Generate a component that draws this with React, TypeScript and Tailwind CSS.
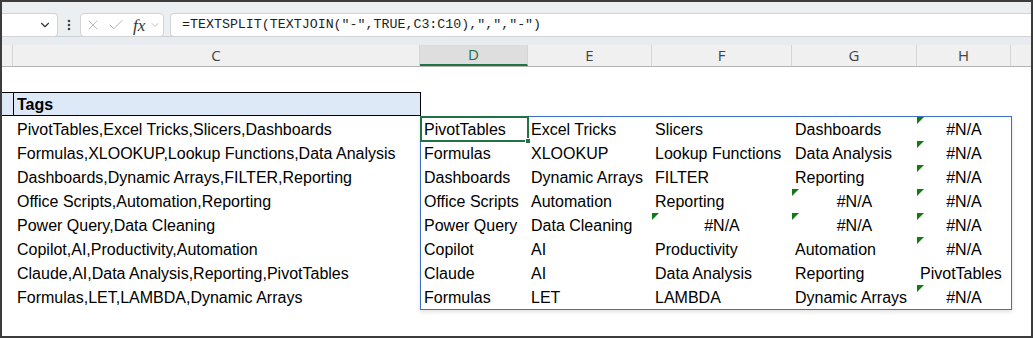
import { ChevronDown, X, Check } from "lucide-react";

const NA = null;

const data: { tags: string; split: (string | null)[] }[] = [
  { tags: "PivotTables,Excel Tricks,Slicers,Dashboards", split: ["PivotTables", "Excel Tricks", "Slicers", "Dashboards", NA] },
  { tags: "Formulas,XLOOKUP,Lookup Functions,Data Analysis", split: ["Formulas", "XLOOKUP", "Lookup Functions", "Data Analysis", NA] },
  { tags: "Dashboards,Dynamic Arrays,FILTER,Reporting", split: ["Dashboards", "Dynamic Arrays", "FILTER", "Reporting", NA] },
  { tags: "Office Scripts,Automation,Reporting", split: ["Office Scripts", "Automation", "Reporting", NA, NA] },
  { tags: "Power Query,Data Cleaning", split: ["Power Query", "Data Cleaning", NA, NA, NA] },
  { tags: "Copilot,AI,Productivity,Automation", split: ["Copilot", "AI", "Productivity", "Automation", NA] },
  { tags: "Claude,AI,Data Analysis,Reporting,PivotTables", split: ["Claude", "AI", "Data Analysis", "Reporting", "PivotTables"] },
  { tags: "Formulas,LET,LAMBDA,Dynamic Arrays", split: ["Formulas", "LET", "LAMBDA", "Dynamic Arrays", NA] },
];

const headers = [
  { label: "C", w: "w-[407px]" },
  { label: "D", w: "w-[108px]", active: true },
  { label: "E", w: "w-[124px]" },
  { label: "F", w: "w-[140px]" },
  { label: "G", w: "w-[125px]" },
  { label: "H", w: "w-[94px]" },
];

function SpillCell({ value, first }: { value: string | null; first: boolean }) {
  if (value === null) {
    return (
      <div className="relative flex h-[24px] items-center justify-center pt-[1px]">
        <span className="absolute left-0 top-0 h-0 w-0 border-t-[7px] border-r-[7px] border-t-[#127a12] border-r-transparent" />
        #N/A
      </div>
    );
  }
  return (
    <div
      className={
        first
          ? "relative flex h-[24px] items-center pl-[3px] pt-[1px] outline-2 -outline-offset-1 outline-[#217346]"
          : "flex h-[24px] items-center whitespace-nowrap pl-[3px] pt-[1px]"
      }
    >
      {value}
      {first && (
        <span className="absolute -bottom-[3px] -right-[3px] z-10 h-[6px] w-[6px] border border-white bg-[#217346]" />
      )}
    </div>
  );
}

export default function App() {
  return (
    <div className="h-[338px] w-[1033px] overflow-hidden border-2 border-[#3c3c3c] bg-white">
      {/* formula bar */}
      <div className="flex h-[35px] items-start border-b border-[#cdd1d5] bg-[#eceff2] pt-[11px]">
        <div className="flex h-[24px] w-[56px] items-center justify-end rounded-r-[4px] border border-l-0 border-[#d3d3d3] bg-white pr-[5px]">
          <ChevronDown size={14} strokeWidth={2} className="text-[#333]" />
        </div>
        <div className="flex h-[24px] w-[22px] items-center justify-center">
          <svg width="4" height="12" viewBox="0 0 4 12">
            <circle cx="2" cy="2" r="1.3" fill="#444" />
            <circle cx="2" cy="6" r="1.3" fill="#444" />
            <circle cx="2" cy="10" r="1.3" fill="#444" />
          </svg>
        </div>
        <div className="flex h-[24px] w-[84px] items-center rounded-[4px] border border-[#d3d3d3] bg-white pl-[4px]">
          <X size={16} strokeWidth={1.3} className="text-[#b0b0b0]" />
          <Check size={18} strokeWidth={1.3} className="ml-[6px] text-[#b0b0b0]" />
          <span className="ml-[8px] font-['Liberation_Serif',serif] text-[17px] italic leading-none text-[#333]">fx</span>
          <ChevronDown size={12} strokeWidth={1.5} className="ml-[4px] text-[#aaa]" />
        </div>
        <div className="ml-[6px] flex h-[24px] flex-1 items-center rounded-l-[4px] border border-r-0 border-[#d3d3d3] bg-white pl-[11px] font-['Liberation_Mono',monospace] text-[13.3px] text-[#1e1e1e]">
          =TEXTSPLIT(TEXTJOIN("-",TRUE,C3:C10),",","-")
        </div>
      </div>

      {/* gap band */}
      <div className="h-[8px] bg-[#e8ecf0]" />

      {/* column headers */}
      <div className="flex h-[22px] border-b border-[#b4b4b4] bg-[#f0f0f0] font-['Open_Sans',sans-serif] text-[15px] text-[#444]">
        <div className="w-[11px] border-r border-[#d6d6d6]" />
        {headers.map((h) => (
          <div
            key={h.label}
            className={
              h.active
                ? `${h.w} flex items-center justify-center border-r border-b-2 border-r-[#d6d6d6] border-b-[#217346] bg-[#dedede] text-[#217346]`
                : `${h.w} flex items-center justify-center border-r border-[#d6d6d6]`
            }
          >
            {h.label}
          </div>
        ))}
        <div className="flex-1" />
      </div>

      <div className="font-['Liberation_Sans',Arial,sans-serif] text-[16px] text-black">
        {/* row 1 */}
        <div className="h-[25px]" />

        {/* row 2 header */}
        <div className="flex h-[24px]">
          <div className="w-[11px] border-y border-black bg-[#dde9f6]" />
          <div className="flex w-[408px] items-center border border-black bg-[#dde9f6] pl-[3px] pt-[1px] font-bold">
            Tags
          </div>
        </div>

        {/* data rows */}
        <div className="flex">
          <div className="w-[11px]" />
          <div className="w-[407px] pt-[1px]">
            {data.map((r) => (
              <div key={r.tags} className="flex h-[24px] items-center whitespace-nowrap pl-[4px] pt-[1px]">
                {r.tags}
              </div>
            ))}
          </div>
          <div className="grid w-[592px] grid-cols-[107px_124px_140px_125px_94px] border border-[#3d6fcf] shadow-[0_2px_4px_rgba(0,0,0,0.12)]">
            {data.map((r, i) =>
              r.split.map((v, j) => (
                <SpillCell key={`${i}-${j}`} value={v} first={i === 0 && j === 0} />
              ))
            )}
          </div>
        </div>
      </div>
    </div>
  );
}
